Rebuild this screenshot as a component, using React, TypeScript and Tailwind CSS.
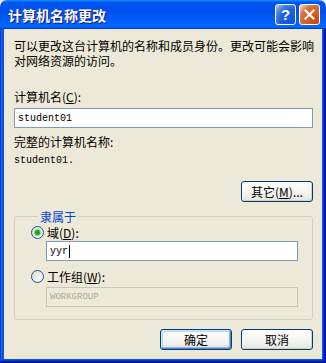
import React from 'react';

const cjk = "font-['Noto_Sans_CJK_SC','Noto_Sans',sans-serif]";
const mono = "font-['Liberation_Mono','Noto_Sans_CJK_SC',monospace]";

function XpButton({ children, isDefault }: { children: React.ReactNode; isDefault?: boolean }) {
  return (
    <button
      className={`w-[72px] h-[21px] rounded-[3px] border border-[#003c74] bg-[linear-gradient(180deg,#ffffff,#f3f3ef_60%,#e6e4d9)] text-[12px] leading-[15px] text-black flex items-center justify-center ${
        isDefault
          ? 'shadow-[inset_-1px_-1px_#6282cf,inset_1px_1px_#cee7ff,inset_-2px_-2px_#8cb4f2,inset_2px_2px_#bcd4f6]'
          : 'shadow-[inset_-1px_-1px_#d6d0c5,inset_1px_1px_#ffffff]'
      }`}
    >
      {children}
    </button>
  );
}

function Radio({ checked }: { checked?: boolean }) {
  return (
    <span className="w-[13px] h-[13px] rounded-full border border-[#1c5180] bg-[linear-gradient(135deg,#dcdcd7,#ffffff)] flex items-center justify-center flex-shrink-0">
      {checked && <span className="w-[5px] h-[5px] rounded-full bg-[#21a121] shadow-[0_0_1px_1px_#7fd47f]" />}
    </span>
  );
}

export default function App() {
  return (
    <div className={`w-[326px] h-[363px] flex flex-col bg-[#ece9d8] ${cjk} text-[12px] text-black`}>
      {/* title bar */}
      <div className="h-[30px] flex items-center pl-[8px] pr-[6px] rounded-t-[7px] bg-[linear-gradient(180deg,#0997ff,#0053ee_8%,#0050ee_40%,#0066ff_88%,#0066ff_93%,#005bff_95%,#003dd7_96%,#003dd7)]">
        <span className="flex-1 text-white font-bold text-[14px] leading-none [text-shadow:1px_1px_#0f1089]">
          计算机名称更改
        </span>
        <div className="flex gap-[3px]">
          <span className="w-[21px] h-[21px] rounded-[3px] border border-white bg-[radial-gradient(circle_at_90%_90%,#0054e9_0%,#2263d5_55%,#4479e4_70%,#a3bbec_95%)] flex items-center justify-center text-white font-bold text-[15px] leading-none font-['Liberation_Sans',sans-serif]">
            ?
          </span>
          <span className="w-[21px] h-[21px] rounded-[3px] border border-white bg-[radial-gradient(circle_at_90%_90%,#cc4600_0%,#dc6527_55%,#cd7546_70%,#ffccb2_95%)] flex items-center justify-center">
            <svg width="11" height="11" viewBox="0 0 11 11">
              <path d="M1.5 1.5 L9.5 9.5 M9.5 1.5 L1.5 9.5" stroke="white" strokeWidth="2.2" strokeLinecap="square" />
            </svg>
          </span>
        </div>
      </div>

      {/* frame + body */}
      <div className="flex-1 flex flex-col bg-[#ece9d8] shadow-[inset_-1px_-1px_#00138c,inset_1px_0_#0831d9,inset_-2px_-2px_#001ea0,inset_2px_0_#166aee,inset_-3px_-3px_#003bda,inset_3px_0_#0855dd,inset_-4px_-4px_#0855dd,inset_4px_0_#0855dd]">
        <div className="flex-1 flex flex-col pl-[14px] pr-[13px] pt-[9px] pb-[13px] leading-[15px]">
          <div className="whitespace-nowrap h-[15px]">可以更改这台计算机的名称和成员身份。更改可能会影响</div>
          <div className="whitespace-nowrap h-[15px]">对网络资源的访问。</div>

          <label className="mt-[21px]">
            计算机名(<u>C</u>):
          </label>
          <div className={`mt-[4px] h-[20px] border border-[#7f9db9] bg-white flex items-center px-[3px] ${mono} text-[10px]`}>
            student01
          </div>

          <div className="mt-[6px]">完整的计算机名称:</div>
          <div className={`mt-[4px] ${mono} text-[10px]`}>student01.</div>

          <div className="mt-[13px] flex justify-end">
            <XpButton>
              其它(<u>M</u>)...
            </XpButton>
          </div>

          <fieldset className="mt-[7px] border border-[#d0d0bf] rounded-[3px] pl-[16px] pr-[14px] pb-[12px]">
            <legend className="ml-[7px] px-[2px] text-[#0046d5]">隶属于</legend>
            <div className="mt-[1px] flex items-center gap-[3px]">
              <Radio checked />
              <span>
                域(<u>D</u>):
              </span>
            </div>
            <div className={`mt-[1px] ml-[15px] h-[20px] border border-[#7f9db9] bg-white flex items-center px-[3px] ${mono} text-[10px]`}>
              yyr<span className="inline-block w-[1px] h-[13px] bg-black ml-[1px]" />
            </div>
            <div className="mt-[8px] flex items-center gap-[3px]">
              <Radio />
              <span>
                工作组(<u>W</u>):
              </span>
            </div>
            <div className={`mt-[3px] ml-[15px] h-[20px] border border-[#c9c7ba] bg-[#ece9d8] flex items-center px-[3px] ${mono} text-[9px] text-[#aca899]`}>
              WORKGROUP
            </div>
          </fieldset>

          <div className="mt-[9px] flex justify-end gap-[9px]">
            <XpButton isDefault>确定</XpButton>
            <XpButton>取消</XpButton>
          </div>
        </div>
      </div>
    </div>
  );
}
